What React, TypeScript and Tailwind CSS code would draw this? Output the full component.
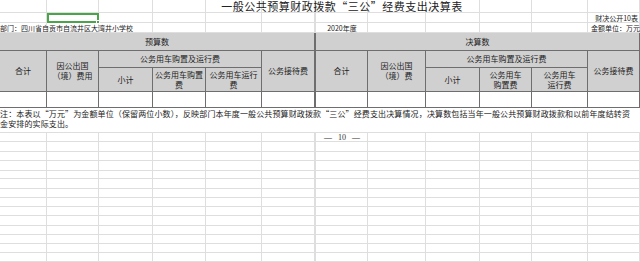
import type { ReactNode } from 'react';

const gridCols =
  'grid grid-cols-[47px_52px_54px_53px_56px_54px_52px_58px_54px_52px_56px_52px]';

const colStart = [
  'col-start-1', 'col-start-2', 'col-start-3', 'col-start-4', 'col-start-5', 'col-start-6',
  'col-start-7', 'col-start-8', 'col-start-9', 'col-start-10', 'col-start-11', 'col-start-12',
];

// plain spreadsheet row: light grid lines, anything passed in sits on top of the cells
function SheetRow({ h, children }: { h: string; children?: ReactNode }) {
  return (
    <div className={`${gridCols} ${h}`}>
      {colStart.map((c, i) => (
        <div
          key={i}
          className={`${c} row-start-1 border-b border-[#dedede] ${i === 5 ? 'border-r-2' : 'border-r'} border-r-[#dedede]`}
        />
      ))}
      {children}
    </div>
  );
}

const hd =
  'flex items-center justify-center text-center bg-[#d0d0d0] border-r border-b border-[#6e6e6e] text-[8px] leading-[10px] text-[#222]';

function HeaderBlock() {
  return (
    <div className={`${gridCols} grid-rows-[18px_17px_24px] border-t border-[#6e6e6e]`}>
      <div className={`${hd} col-start-1 col-span-6 row-start-1 border-r-2`}>预算数</div>
      <div className={`${hd} col-start-7 col-span-6 row-start-1`}>决算数</div>

      <div className={`${hd} col-start-1 row-start-2 row-span-2`}>合计</div>
      <div className={`${hd} col-start-2 row-start-2 row-span-2`}>
        因公出国
        <br />
        （境）费用
      </div>
      <div className={`${hd} col-start-3 col-span-3 row-start-2`}>公务用车购置及运行费</div>
      <div className={`${hd} col-start-6 row-start-2 row-span-2 border-r-2`}>公务接待费</div>
      <div className={`${hd} col-start-3 row-start-3`}>小计</div>
      <div className={`${hd} col-start-4 row-start-3`}>
        公务用车购置
        <br />
        费
      </div>
      <div className={`${hd} col-start-5 row-start-3`}>
        公务用车运行
        <br />
        费
      </div>

      <div className={`${hd} col-start-7 row-start-2 row-span-2`}>合计</div>
      <div className={`${hd} col-start-8 row-start-2 row-span-2`}>
        因公出国
        <br />
        （境）费
      </div>
      <div className={`${hd} col-start-9 col-span-3 row-start-2`}>公务用车购置及运行费</div>
      <div className={`${hd} col-start-12 row-start-2 row-span-2`}>公务接待费</div>
      <div className={`${hd} col-start-9 row-start-3`}>小计</div>
      <div className={`${hd} col-start-10 row-start-3`}>
        公务用车
        <br />
        购置费
      </div>
      <div className={`${hd} col-start-11 row-start-3`}>
        公务用车
        <br />
        运行费
      </div>
    </div>
  );
}

function DataRow() {
  return (
    <div className={`${gridCols} h-[16px]`}>
      {colStart.map((c, i) => (
        <div
          key={i}
          className={`${c} border-b border-[#6e6e6e] ${i === 5 ? 'border-r-2' : 'border-r'}`}
        />
      ))}
    </div>
  );
}

const lowerRows = [
  'h-[9px]', 'h-[10px]', 'h-[9px]', 'h-[10px]', 'h-[8px]', 'h-[10px]', 'h-[9px]',
  'h-[9px]', 'h-[9px]', 'h-[10px]', 'h-[9px]', 'h-[9px]', 'h-[9px]', 'h-[9px]',
];

export default function App() {
  return (
    <div className="w-[640px] h-[262px] overflow-hidden bg-white text-[#222] font-['Noto_Sans_CJK_SC','Noto_Sans',sans-serif]">
      {/* title */}
      <SheetRow h="h-[13px]">
        <div className="col-start-1 col-span-12 row-start-1 pl-[44px] text-center text-[11px] leading-[13px] tracking-[0.5px] whitespace-nowrap">
          一般公共预算财政拨款“三公”经费支出决算表
        </div>
      </SheetRow>

      <SheetRow h="h-[10px]">
        <div className="col-start-2 row-start-1 relative border-2 border-[#4aa54a]">
          <span className="absolute -right-[3px] -bottom-[3px] w-[4px] h-[4px] bg-[#4aa54a] border border-white" />
        </div>
        <div className="col-start-11 col-span-2 row-start-1 text-right pr-[2px] pt-[1px] text-[7px] leading-[9px] whitespace-nowrap">
          财决公开10表
        </div>
      </SheetRow>

      <SheetRow h="h-[9px]">
        <div className="col-start-1 col-span-4 row-start-1 pt-[1px] text-[7px] leading-[9px] whitespace-nowrap">
          部门：四川省自贡市自流井区大湾井小学校
        </div>
        <div className="col-start-7 row-start-1 pt-[1px] text-center text-[7px] leading-[9px] whitespace-nowrap">
          2020年度
        </div>
        <div className="col-start-11 col-span-2 row-start-1 pt-[1px] text-right text-[7px] leading-[9px] whitespace-nowrap">
          金额单位：万元
        </div>
      </SheetRow>

      <HeaderBlock />
      <DataRow />

      {/* note */}
      <div className="h-[25px] pt-[1px] border-b border-[#dedede] text-[8px] leading-[10px] tracking-[0.13px] whitespace-nowrap">
        <div>
          注：本表以“万元”为金额单位（保留两位小数），反映部门本年度一般公共预算财政拨款“三公”经费支出决算情况，决算数包括当年一般公共预算财政拨款和以前年度结转资
        </div>
        <div>金安排的实际支出。</div>
      </div>

      {lowerRows.map((h, i) => (
        <SheetRow key={i} h={h}>
          {i === 0 && (
            <div className="col-start-7 row-start-1 flex items-center justify-center gap-[6px] text-[8px] leading-[9px] font-['Liberation_Serif',serif] text-[#333] whitespace-nowrap">
              <span>—</span>
              <span>10</span>
              <span>—</span>
            </div>
          )}
        </SheetRow>
      ))}
    </div>
  );
}
